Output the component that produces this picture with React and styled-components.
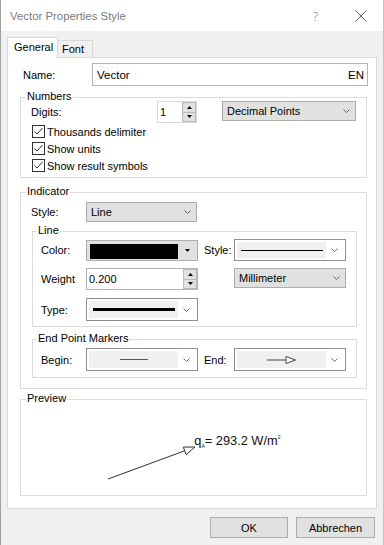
import React from "react";
import styled, { createGlobalStyle } from "styled-components";

const GlobalStyle = createGlobalStyle`
  *, *::before, *::after { box-sizing: border-box; }
  html, body { margin: 0; padding: 0; }
  body {
    background: #f0f0f0;
    font-family: "Liberation Sans", Arial, sans-serif;
    font-size: 11px;
    color: #000;
  }
`;

const Window = styled.div`
  width: 384px;
  height: 545px;
  display: flex;
  flex-direction: column;
  background: #f0f0f0;
  border-left: 1px solid #a0a0a0;
  border-right: 1px solid #c4c4c4;
  overflow: hidden;
`;

const TitleBar = styled.div`
  height: 31px;
  flex: none;
  display: flex;
  align-items: center;
  background: #fff;
  padding-left: 9px;
`;

const TitleText = styled.div`
  flex: 1;
  font-size: 11.4px;
  color: #7a7a7a;
`;

const HelpGlyph = styled.span`
  width: 7px;
  margin-right: 36px;
  font-family: "Open Sans", "Liberation Sans", sans-serif;
  font-size: 13px;
  font-weight: 300;
  color: #7a7a7a;
  text-align: center;
`;

const CloseGlyph = styled.span`
  display: flex;
  width: 12px;
  height: 12px;
  margin-right: 16px;
`;

const Body = styled.div`
  flex: 1;
  display: flex;
  flex-direction: column;
  padding: 6px 6px 0 6px;
`;

const TabStrip = styled.div`
  display: flex;
  align-items: flex-end;
  height: 20px;
  flex: none;
`;

const Tab = styled.div`
  position: relative;
  z-index: ${(p) => (p.$active ? 1 : 0)};
  width: ${(p) => p.$w}px;
  height: ${(p) => (p.$active ? 21 : 17)}px;
  margin-bottom: ${(p) => (p.$active ? -1 : 0)}px;
  padding-left: ${(p) => p.$pl}px;
  padding-top: ${(p) => (p.$active ? 3 : 2)}px;
  background: ${(p) => (p.$active ? "#fff" : "#f0f0f0")};
  border: 1px solid #d9d9d9;
  border-bottom: none;
  border-left: ${(p) => (p.$active ? "1px solid #d9d9d9" : "none")};
  line-height: 13px;
`;

const Panel = styled.div`
  height: 452px;
  flex: none;
  display: flex;
  flex-direction: column;
  background: #fff;
  border: 1px solid #d9d9d9;
  padding: 5px 9px 0 12px;
`;

const NameRow = styled.div`
  display: flex;
  align-items: center;
  height: 23px;
`;

const NameLabel = styled.span`
  width: 72px;
  padding-left: 3px;
  flex: none;
`;

const NameInput = styled.div`
  width: 277px;
  height: 23px;
  margin-right: -1px;
  display: flex;
  align-items: center;
  justify-content: space-between;
  padding: 0 3px 0 4px;
  border: 1px solid #b4b4b4;
  font-size: 11.5px;
`;

const Group = styled.div`
  border: 1px solid #dcdcdc;
  margin-top: ${(p) => p.$mt || 0}px;
  margin-left: ${(p) => p.$ml || 0}px;
  margin-right: ${(p) => p.$mr || 0}px;
  padding: 0 ${(p) => p.$pr || 0}px ${(p) => p.$pb || 0}px ${(p) => p.$pl || 0}px;
`;

const GroupTitle = styled.div`
  width: fit-content;
  height: 14px;
  line-height: 14px;
  margin: -9px 0 0 ${(p) => p.$ml}px;
  padding: 0 1px;
  background: #fff;
`;

const Row = styled.div`
  display: flex;
  align-items: ${(p) => p.$align || "center"};
  height: ${(p) => p.$h}px;
  margin-top: ${(p) => p.$mt || 0}px;
`;

const FieldGrid = styled.div`
  display: grid;
  grid-template-columns: 45px 112px 6px 30px 112px;
  align-items: center;
  height: ${(p) => p.$h}px;
  margin-top: ${(p) => p.$mt || 0}px;
`;

const Label = styled.span`
  flex: none;
  width: ${(p) => (p.$w ? `${p.$w}px` : "auto")};
  grid-column: ${(p) => p.$col || "auto"};
`;

const GrayCombo = styled.div`
  flex: none;
  width: ${(p) => p.$w}px;
  height: 20px;
  margin-left: ${(p) => p.$ml || 0}px;
  display: flex;
  align-items: center;
  justify-content: space-between;
  padding: 0 5px 0 4px;
  background: #e1e1e1;
  border: 1px solid #adadad;
  grid-column: ${(p) => p.$col || "auto"};
`;

const LineCombo = styled.div`
  flex: none;
  width: ${(p) => p.$w}px;
  height: ${(p) => p.$h}px;
  display: flex;
  padding: 2px;
  background: #fff;
  border: 1px solid #8f8f8f;
  grid-column: ${(p) => p.$col || "auto"};
`;

const LineSample = styled.div`
  flex: none;
  width: 89px;
  display: flex;
  align-items: center;
  justify-content: center;
  background: #f0f0f0;
`;

const Stroke = styled.div`
  width: ${(p) => p.$w}px;
  height: ${(p) => p.$t}px;
  background: ${(p) => p.$c};
`;

const ArrowSlot = styled.div`
  flex: 1;
  display: flex;
  align-items: center;
  justify-content: center;
`;

const ColorCombo = styled.div`
  width: 112px;
  height: 21px;
  display: flex;
  padding: 2px 0 2px 3px;
  background: #e1e1e1;
  border: 1px solid #adadad;
`;

const Swatch = styled.div`
  width: 88px;
  height: 15px;
  margin-top: 1px;
  background: ${(p) => p.$color};
`;

const SpinBox = styled.div`
  flex: none;
  width: ${(p) => p.$w}px;
  height: 22px;
  display: flex;
  align-items: stretch;
  background: #fff;
  border: 1px solid ${(p) => p.$border};
`;

const SpinValue = styled.span`
  flex: 1;
  display: flex;
  align-items: center;
  padding-left: 2px;
`;

const SpinButtons = styled.div`
  width: 14px;
  display: flex;
  flex-direction: column;
`;

const SpinButton = styled.div`
  flex: 1;
  display: flex;
  align-items: center;
  justify-content: center;
  background: #e1e1e1;
  border: 1px solid #b9b9b9;
  & + & { margin-top: -1px; }
`;

const CheckRow = styled.label`
  display: flex;
  align-items: center;
  gap: 2px;
  height: 17px;
  padding-left: 1px;
`;

const CheckBox = styled.span`
  display: flex;
  width: 13px;
  height: 13px;
  background: #fff;
  border: 1px solid #333;
`;

const PreviewCanvas = styled.svg`
  display: block;
`;

const Footer = styled.div`
  display: flex;
  justify-content: flex-end;
  gap: 8px;
  padding: 8px 2px 0 0;
`;

const Button = styled.div`
  width: ${(p) => p.$w}px;
  height: 21px;
  display: flex;
  align-items: center;
  justify-content: center;
  background: #e1e1e1;
  border: 1px solid #adadad;
`;

const Chevron = () => (
  <svg width="7" height="4" viewBox="0 0 7 4">
    <polyline points="0.5,0.5 3.5,3.5 6.5,0.5" fill="none" stroke="#666" strokeWidth="1" />
  </svg>
);

const Tri = ({ up }) => (
  <svg width="5" height="3" viewBox="0 0 5 3">
    <polygon points={up ? "0,3 5,3 2.5,0" : "0,0 5,0 2.5,3"} fill="#000" />
  </svg>
);

const Check = () => (
  <svg width="11" height="11" viewBox="0 0 11 11">
    <polyline points="1.5,5.5 4,8 9.5,2" fill="none" stroke="#333" strokeWidth="1" />
  </svg>
);

const Checked = ({ children }) => (
  <CheckRow>
    <CheckBox>
      <Check />
    </CheckBox>
    {children}
  </CheckRow>
);

const Spin = ({ w, value, border }) => (
  <SpinBox $w={w} $border={border}>
    <SpinValue>{value}</SpinValue>
    <SpinButtons>
      <SpinButton>
        <Tri up />
      </SpinButton>
      <SpinButton>
        <Tri />
      </SpinButton>
    </SpinButtons>
  </SpinBox>
);

const EndArrow = () => (
  <svg width="30" height="8" viewBox="0 0 30 8">
    <line x1="0" y1="4" x2="19" y2="4" stroke="#444" strokeWidth="1" />
    <polygon points="19,0.5 28.5,4 19,7.5" fill="#fff" stroke="#444" strokeWidth="1" />
  </svg>
);

export default function App() {
  return (
    <>
      <GlobalStyle />
      <Window>
        <TitleBar>
          <TitleText>Vector Properties Style</TitleText>
          <HelpGlyph>?</HelpGlyph>
          <CloseGlyph>
            <svg width="12" height="12" viewBox="0 0 12 12">
              <line x1="0.5" y1="0.5" x2="11.5" y2="11.5" stroke="#666" strokeWidth="1" />
              <line x1="11.5" y1="0.5" x2="0.5" y2="11.5" stroke="#666" strokeWidth="1" />
            </svg>
          </CloseGlyph>
        </TitleBar>
        <Body>
          <TabStrip>
            <Tab $active $w={51} $pl={6}>General</Tab>
            <Tab $w={35} $pl={4}>Font</Tab>
          </TabStrip>
          <Panel>
            <NameRow>
              <NameLabel>Name:</NameLabel>
              <NameInput>
                <span>Vector</span>
                <span>EN</span>
              </NameInput>
            </NameRow>

            <Group $mt={11} $pl={10} $pr={10} $pb={3}>
              <GroupTitle $ml={-5}>Numbers</GroupTitle>
              <Row $h={22} $mt={-2} $align="flex-start">
                <Label $w={126} style={{ alignSelf: "center" }}>Digits:</Label>
                <Spin w={40} value="1" border="#dadada" />
                <GrayCombo $w={134} $ml={25}>
                  <span>Decimal Points</span>
                  <Chevron />
                </GrayCombo>
              </Row>
              <Checked>Thousands delimiter</Checked>
              <Checked>Show units</Checked>
              <Checked>Show result symbols</Checked>
            </Group>

            <Group $mt={14} $pl={10} $pr={10} $pb={10}>
              <GroupTitle $ml={-5}>Indicator</GroupTitle>
              <Row $h={20} $mt={4}>
                <Label $w={55}>Style:</Label>
                <GrayCombo $w={111}>
                  <span>Line</span>
                  <Chevron />
                </GrayCombo>
              </Row>

              <Group $mt={9} $ml={1} $mr={-1} $pl={8} $pr={10} $pb={5}>
                <GroupTitle $ml={-4}>Line</GroupTitle>
                <FieldGrid $h={22} $mt={2}>
                  <Label>Color:</Label>
                  <ColorCombo>
                    <Swatch $color="#000" />
                    <ArrowSlot>
                      <Tri />
                    </ArrowSlot>
                  </ColorCombo>
                  <Label $col={4}>Style:</Label>
                  <LineCombo $w={112} $h={22} $col={5}>
                    <LineSample>
                      <Stroke $w={82} $t={1} $c="#000" />
                    </LineSample>
                    <ArrowSlot>
                      <Chevron />
                    </ArrowSlot>
                  </LineCombo>
                </FieldGrid>
                <FieldGrid $h={22} $mt={7}>
                  <Label>Weight</Label>
                  <Spin w={112} value="0.200" border="#b4b4b4" />
                  <GrayCombo $w={112} $col={5} style={{ alignSelf: "start" }}>
                    <span>Millimeter</span>
                    <Chevron />
                  </GrayCombo>
                </FieldGrid>
                <FieldGrid $h={23} $mt={8}>
                  <Label>Type:</Label>
                  <LineCombo $w={112} $h={23}>
                    <LineSample>
                      <Stroke $w={82} $t={3} $c="#000" />
                    </LineSample>
                    <ArrowSlot>
                      <Chevron />
                    </ArrowSlot>
                  </LineCombo>
                </FieldGrid>
              </Group>

              <Group $mt={12} $ml={1} $mr={-1} $pl={8} $pr={10} $pb={6}>
                <GroupTitle $ml={-4}>End Point Markers</GroupTitle>
                <FieldGrid $h={23} $mt={3}>
                  <Label>Begin:</Label>
                  <LineCombo $w={112} $h={23}>
                    <LineSample>
                      <Stroke $w={28} $t={1} $c="#555" />
                    </LineSample>
                    <ArrowSlot>
                      <Chevron />
                    </ArrowSlot>
                  </LineCombo>
                  <Label $col={4}>End:</Label>
                  <LineCombo $w={112} $h={23} $col={5}>
                    <LineSample>
                      <EndArrow />
                    </LineSample>
                    <ArrowSlot>
                      <Chevron />
                    </ArrowSlot>
                  </LineCombo>
                </FieldGrid>
              </Group>
            </Group>

            <Group $mt={10}>
              <GroupTitle $ml={5}>Preview</GroupTitle>
              <PreviewCanvas width="345" height="90" viewBox="0 0 345 90">
                <line x1="87" y1="74" x2="163.7" y2="45.8" stroke="#333" strokeWidth="1" />
                <polygon
                  points="174,42 165.1,49.6 162.3,42.1"
                  fill="#fff"
                  stroke="#333"
                  strokeWidth="1"
                />
                <text
                  x="173.3"
                  y="40"
                  fontSize="12.8"
                  fill="#111"
                  fontFamily="Liberation Sans, Arial, sans-serif"
                >
                  q
                  <tspan fontSize="5" dy="3">A</tspan>
                  <tspan dy="-3">= 293.2 W/m</tspan>
                  <tspan fontSize="5" dy="-6">2</tspan>
                </text>
              </PreviewCanvas>
            </Group>
          </Panel>
          <Footer>
            <Button $w={78}>OK</Button>
            <Button $w={79}>Abbrechen</Button>
          </Footer>
        </Body>
      </Window>
    </>
  );
}
